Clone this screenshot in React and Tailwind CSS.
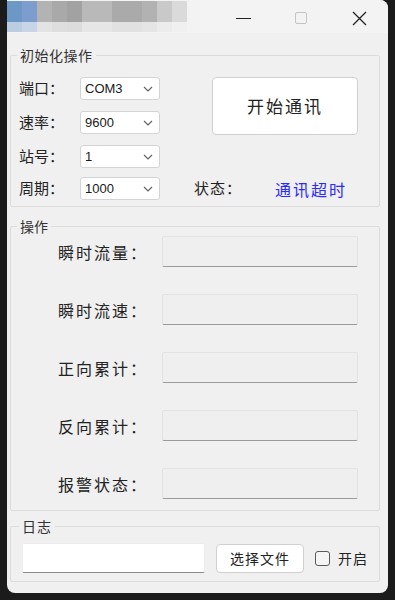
import React from "react";

const cjk = { fontFamily: '"Noto Sans CJK SC", "Noto Sans", sans-serif' };

function Combo({ value }) {
  return (
    <div className="w-[80px] h-[23px] bg-white border border-[#d4d4d4] rounded-[3px] flex items-center justify-between pl-[4px] pr-[6px]">
      <span className="text-[13px] text-[#1a1a1a]" style={{ fontFamily: '"Liberation Sans", Arial, sans-serif' }}>{value}</span>
      <svg width="10" height="6" viewBox="0 0 10 6">
        <polyline points="1,1 5,5 9,1" fill="none" stroke="#606060" strokeWidth="1.1" />
      </svg>
    </div>
  );
}

function Row({ label, value, className = "" }) {
  return (
    <div className={"flex items-center h-[23px] " + className}>
      <span className="w-[61px] text-[15px] text-[#222]" style={cjk}>{label}</span>
      <Combo value={value} />
    </div>
  );
}

function Field({ label, className = "" }) {
  return (
    <div className={"flex items-center " + className}>
      <span className="w-[137px] text-right text-[16px] tracking-[2px] text-[#222]" style={cjk}>{label}</span>
      <div className="ml-[14px] w-[196px] h-[31px] bg-[#efefef] border border-[#e2e2e2] border-b-[#9a9a9a] rounded-[2px]" />
    </div>
  );
}

export default function App() {
  const blocks1 = ["#6c98c6", "#7e9dcf", "#b3b3b3", "#a9a9a9", "#a2a2a2", "#b9b9b9", "#b9b9b9", "#aaaaaa", "#aaaaaa", "#b2b2b2", "#c9c9c9", "#dadada"];
  const blocks2 = ["#bccde2", "#c8d4e8", "#e3e3e3", "#dedede", "#dcdcdc", "#e6e6e6", "#e6e6e6", "#e1e1e1", "#e1e1e1", "#e5e5e5", "#ececec", "#f0f0f0"];
  return (
    <div className="w-[395px] h-[600px] bg-[#1b1b1b] overflow-hidden">
      <div className="ml-[7px] w-[381px] h-[593px] bg-[#f0f0f0] rounded-tr-[8px] rounded-b-[8px] flex flex-col overflow-hidden">
        {/* title bar */}
        <div className="h-[33px] bg-[#f3f3f3] flex relative">
          <div className="flex flex-col mt-[1px]">
            <div className="flex h-[21px]">
              {blocks1.map((c, i) => (
                <div key={i} className="w-[15px] h-full" style={{ background: c }} />
              ))}
            </div>
            <div className="flex h-[10px]">
              {blocks2.map((c, i) => (
                <div key={i} className="w-[15px] h-full" style={{ background: c }} />
              ))}
            </div>
          </div>
          <div className="ml-auto flex items-start">
            <div className="w-[15px] h-[1px] bg-[#222] mt-[18px] mr-[44px]" />
            <div className="w-[12px] h-[12px] border border-[#c4c4c4] rounded-[2px] mt-[12px] mr-[45px]" />
            <svg className="mt-[11px] mr-[21px]" width="15" height="15" viewBox="0 0 15 15">
              <path d="M1 1 L14 14 M14 1 L1 14" stroke="#222" strokeWidth="1.3" />
            </svg>
          </div>
        </div>

        {/* group 1 */}
        <fieldset className="mt-[14px] mx-[3px] w-[370px] border border-[#dcdcdc] rounded-[2px] pt-[14px] pb-[6px]">
          <legend className="ml-[6px] px-[3px] h-[16px] leading-[16px] text-[14px] tracking-[0.5px] text-[#333]" style={cjk}>初始化操作</legend>
          <div className="flex pl-[8px]">
            <div className="flex flex-col">
              <Row label="端口：" value="COM3" />
              <Row label="速率：" value="9600" className="mt-[11px]" />
              <Row label="站号：" value="1" className="mt-[11px]" />
              <Row label="周期：" value="1000" className="mt-[9px]" />
            </div>
            <div className="flex flex-col justify-between ml-[34px]">
              <button className="ml-[18px] w-[146px] h-[58px] bg-white border border-[#d0d0d0] rounded-[4px] text-[17px] tracking-[2px] text-[#222]" style={cjk}>开始通讯</button>
              <div className="flex items-center h-[23px]">
                <span className="w-[81px] text-[15px] tracking-[1px] text-[#222]" style={cjk}>状态：</span>
                <span className="text-[16px] tracking-[2px] text-[#2a2aff]" style={cjk}>通讯超时</span>
              </div>
            </div>
          </div>
        </fieldset>

        {/* group 2 */}
        <fieldset className="mt-[11px] mx-[3px] w-[370px] border border-[#dcdcdc] rounded-[2px] pt-[2px] pb-[11px]">
          <legend className="ml-[6px] px-[3px] h-[16px] leading-[16px] text-[14px] text-[#333]" style={cjk}>操作</legend>
          <Field label="瞬时流量：" />
          <Field label="瞬时流速：" className="mt-[27px]" />
          <Field label="正向累计：" className="mt-[27px]" />
          <Field label="反向累计：" className="mt-[27px]" />
          <Field label="报警状态：" className="mt-[27px]" />
        </fieldset>

        {/* group 3 */}
        <fieldset className="mt-[7px] mx-[3px] w-[370px] border border-[#dcdcdc] rounded-[2px] pt-[9px] pb-[8px]">
          <legend className="ml-[8px] px-[3px] h-[16px] leading-[16px] text-[14px] tracking-[1px] text-[#333]" style={cjk}>日志</legend>
          <div className="flex items-center pl-[11px]">
            <div className="w-[183px] h-[30px] bg-white border border-[#ececec] border-b-[#8a8a8a] rounded-[2px]" />
            <button className="ml-[11px] w-[88px] h-[29px] bg-white border border-[#d0d0d0] rounded-[4px] text-[14px] tracking-[1px] text-[#222]" style={cjk}>选择文件</button>
            <div className="ml-[11px] w-[15px] h-[15px] border border-[#5a5a5a] rounded-[3px] bg-[#f5f5f5]" />
            <span className="ml-[8px] text-[14px] tracking-[1px] text-[#222]" style={cjk}>开启</span>
          </div>
        </fieldset>
      </div>
    </div>
  );
}
